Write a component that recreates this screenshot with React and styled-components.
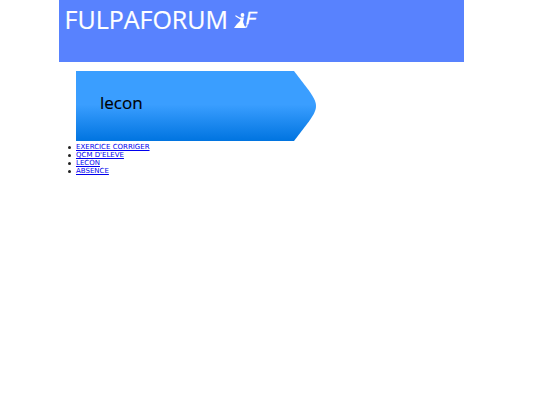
import React from 'react';
import styled, { createGlobalStyle } from 'styled-components';

const links = ['EXERCICE CORRIGER', "QCM D'ELEVE", 'LECON', 'ABSENCE'];

export default function App() {
  return (
    <>
      <GlobalStyle />
      <Page>
        <Header>
          <Title>FULPAFORUM</Title>
          <Logo>
            <svg width="16" height="16" viewBox="0 0 16 16">
              <circle cx="8.5" cy="2" r="1.9" fill="#fff" />
              <path d="M1.5 2 L5.5 4.5 L10 4.5 L9 9 L10.5 13 L12 15 L0 15 L3 11 L6 8 L6.5 6.5 L1.5 3.5 Z" fill="#fff" />
              <path d="M14.5 5 L12.6 14 L10 14" stroke="#fff" strokeWidth="1.1" fill="none" />
            </svg>
            <LogoLetter>F</LogoLetter>
          </Logo>
        </Header>
        <Main>
          <Banner>lecon</Banner>
          <Menu>
            {links.map((link) => (
              <MenuItem key={link}>
                <MenuLink href="#">{link}</MenuLink>
              </MenuItem>
            ))}
          </Menu>
        </Main>
      </Page>
    </>
  );
}

const GlobalStyle = createGlobalStyle`
  body {
    margin: 0;
    background: #fff;
    font-family: "DejaVu Sans", sans-serif;
  }
`;

const Page = styled.div`
  width: 405px;
  margin-left: 59px;
`;

const Header = styled.header`
  display: flex;
  align-items: flex-start;
  height: 62px;
  padding: 2px 0 0 5.5px;
  box-sizing: border-box;
  background: #5882fe;
`;

const Title = styled.h1`
  margin: 0;
  font-family: "Open Sans", sans-serif;
  font-size: 25px;
  font-weight: 400;
  line-height: 34px;
  color: #fff;
  -webkit-text-stroke: 0.2px #fff;
`;

const Logo = styled.div`
  display: flex;
  align-items: flex-end;
  height: 25px;
  margin: 2px 0 0 6px;
`;

const LogoLetter = styled.span`
  margin-left: -4px;
  font-family: "Liberation Sans", sans-serif;
  font-size: 17px;
  line-height: 20px;
  font-style: italic;
  color: #fff;
  -webkit-text-stroke: 0.3px #fff;
`;

const Main = styled.main`
  padding: 9px 0 0 17px;
`;

const Banner = styled.div`
  display: flex;
  align-items: center;
  width: 240px;
  height: 70px;
  padding: 0 0 7px 24px;
  box-sizing: border-box;
  font-family: "Open Sans", sans-serif;
  font-size: 17px;
  color: #000;
  -webkit-text-stroke: 0.15px #000;
  background: linear-gradient(#3a9eff 0%, #3a9eff 48%, #0074e0 100%);
  clip-path: path('M0 0 H218 L231 17 C237 25 240 30 240 35 C240 40 237 45 231 53 L218 70 H0 Z');
`;

const Menu = styled.ul`
  margin: 2px 0 0;
  padding: 0;
  list-style: none;
  font-size: 7px;
  line-height: 8px;
  color: #000;
`;

const MenuItem = styled.li`
  display: flex;
  align-items: center;

  &::before {
    content: '';
    width: 3px;
    height: 3px;
    margin: 0 5px 0 -8px;
    border-radius: 50%;
    background: #222;
  }
`;

const MenuLink = styled.a`
  color: #0000ee;
`;
